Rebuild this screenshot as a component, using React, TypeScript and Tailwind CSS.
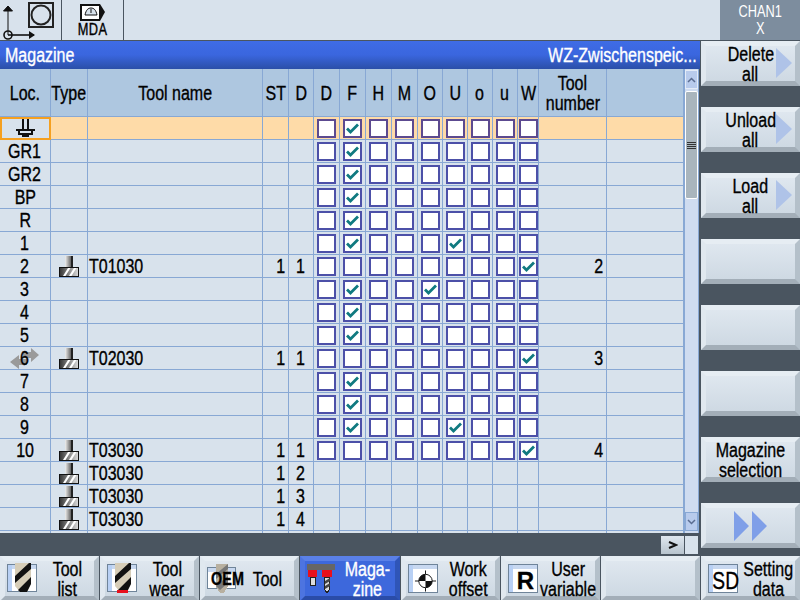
import React from 'react';

const FONT = "font-['Liberation_Sans',sans-serif]";
const GRID = 'grid grid-cols-[51px_37px_175px_26px_25px_26px_26px_26px_26px_25px_25px_25px_25px_21px_68px_77px]';
const CELL = 'border-r border-b border-[#88a8d4] flex items-center justify-center overflow-hidden';

const FLAGS = ['D', 'F', 'H', 'M', 'O', 'U', 'o', 'u', 'W'];

interface Row {
  loc?: React.ReactNode;
  tool?: string;
  st?: string;
  d?: string;
  checks?: string;
  num?: string;
  active?: boolean;
  move?: boolean;
}

// The panel font is a narrow bitmap face, nothing installed is that narrow
function Txt({ children, align = 'center' }: { children: React.ReactNode; align?: 'left' | 'center' | 'right' }) {
  const origin = align === 'left' ? 'origin-left' : align === 'right' ? 'origin-right' : 'origin-center';
  return <span className={`inline-block whitespace-nowrap scale-x-[0.8] ${origin}`}>{children}</span>;
}

const rows: Row[] = [
  { loc: <SpindleIcon />, checks: 'F', active: true },
  { loc: 'GR1', checks: 'F' },
  { loc: 'GR2', checks: 'F' },
  { loc: 'BP', checks: 'F' },
  { loc: 'R', checks: 'F' },
  { loc: '1', checks: 'FU' },
  { loc: '2', tool: 'T01030', st: '1', d: '1', checks: 'W', num: '2' },
  { loc: '3', checks: 'FO' },
  { loc: '4', checks: 'F' },
  { loc: '5', checks: 'F' },
  { loc: '6', tool: 'T02030', st: '1', d: '1', checks: 'W', num: '3', move: true },
  { loc: '7', checks: 'F' },
  { loc: '8', checks: 'F' },
  { loc: '9', checks: 'FU' },
  { loc: '10', tool: 'T03030', st: '1', d: '1', checks: 'W', num: '4' },
  { tool: 'T03030', st: '1', d: '2' },
  { tool: 'T03030', st: '1', d: '3' },
  { tool: 'T03030', st: '1', d: '4' },
  { checks: '' },
];

function SpindleIcon() {
  return (
    <svg width="19" height="19" viewBox="0 0 19 19" shapeRendering="crispEdges">
      <path d="M6 0h2v10H6zM11 0h2v10h-2zM0 10h19v2H0zM2 14h15v2H2zM2 12h2v2H2zM15 12h2v2h-2zM6 16h7v2H6z" fill="#111" />
    </svg>
  );
}

function CutterIcon() {
  return (
    <svg width="20" height="21" viewBox="0 0 20 21" shapeRendering="crispEdges">
      <defs>
        <linearGradient id="shank" x1="0" x2="1" y1="0" y2="0">
          <stop offset="0" stopColor="#f0f0f0" />
          <stop offset="0.6" stopColor="#808080" />
          <stop offset="1" stopColor="#333333" />
        </linearGradient>
        <linearGradient id="base" x1="0" x2="1" y1="0" y2="0">
          <stop offset="0" stopColor="#333333" />
          <stop offset="1" stopColor="#dddddd" />
        </linearGradient>
      </defs>
      <rect x="6" y="0" width="8" height="11" fill="url(#shank)" />
      <rect x="12" y="0" width="2" height="11" fill="#222" />
      <rect x="0.5" y="11.5" width="19" height="9" fill="url(#base)" stroke="#111" />
      <path d="M4 20l5-8h2.5l-5 8zM10 20l5-8h2.5l-5 8z" fill="#fff" shapeRendering="auto" />
    </svg>
  );
}

function Checkbox({ checked, warm }: { checked: boolean; warm?: boolean }) {
  return (
    <div className={`w-[19px] h-[19px] bg-white border-2 ${warm ? 'border-[#5c4a90]' : 'border-[#4c50a8]'} flex items-center justify-center shrink-0`}>
      {checked && (
        <svg width="15" height="13" viewBox="0 0 15 13">
          <path d="M2 6.5l3.5 3.5L13 2.5" fill="none" stroke="#107a80" strokeWidth="2.8" />
        </svg>
      )}
    </div>
  );
}

function MoveArrows() {
  return (
    <svg className="absolute left-[10px] top-[1px]" width="30" height="22" viewBox="0 0 30 22">
      <path d="M0 14l9-7v4h8v6H9v4zM29 7l-8-7v4h-8v6h8v4z" fill="#9a9a9a" />
    </svg>
  );
}

function Drill({ red }: { red?: boolean }) {
  return (
    <svg width="30" height="31" viewBox="0 0 30 31" shapeRendering="crispEdges">
      <rect x="0.5" y="1.5" width="29" height="27" fill="#fff" stroke="#6f8499" />
      <rect x="1" y="2" width="28" height="4" fill="#c8d8f0" />
      <rect x="1" y="2" width="4" height="26" fill="#b8d0f4" />
      <path d="M8 0h16v20l-4 9h-7l-5-6z" fill="#d6cdb8" shapeRendering="auto" />
      <path d="M8 13L22 0h2v6L8 20zM11 27L24 14v7l-4 8h-7z" fill="#111" shapeRendering="auto" />
      {red && <rect x="10" y="27" width="11" height="3" fill="#e8101c" />}
    </svg>
  );
}

function OemIcon() {
  return (
    <div className="relative w-[30px] h-[30px]">
      <svg width="30" height="30" viewBox="0 0 30 30" shapeRendering="crispEdges">
        <rect x="0.5" y="3.5" width="28" height="21" fill="#fff" stroke="#6f8499" />
        <rect x="1" y="4" width="27" height="4" fill="#c8d8f0" />
        <path d="M9 0h12v22l-4 7h-4l-4-6z" fill="#b8b0a0" />
        <path d="M9 10L21 0v5L9 15zM9 22L21 12v7l-8 7z" fill="#777" shapeRendering="auto" />
      </svg>
      <span className="absolute left-0 top-[6px] w-full text-center text-[18px] leading-[18px] font-bold">
        <Txt>OEM</Txt>
      </span>
    </div>
  );
}

function MagazineIcon() {
  return (
    <svg width="30" height="30" viewBox="0 0 30 30" shapeRendering="crispEdges">
      <rect x="0" y="0" width="28" height="6" fill="#666" />
      <rect x="1" y="6" width="9" height="7" fill="#e8101c" />
      <rect x="15" y="6" width="10" height="7" fill="#e8101c" />
      <rect x="3.5" y="13.5" width="5" height="8" fill="#ddd" stroke="#222" />
      <path d="M17.5 13.5h5v12l-2.5 3.5-2.5-3.5z" fill="#ddd" stroke="#222" />
      <path d="M18 17l5-3v3l-5 3zM18 22l5-3v3l-5 3z" fill="#444" shapeRendering="auto" />
    </svg>
  );
}

function FramedIcon({ children }: { children: React.ReactNode }) {
  return (
    <div className="relative border border-[#6f8499] bg-white w-[30px] h-[29px] pl-[5px] pt-[4px] shrink-0">
      <div className="absolute left-0 top-0 right-0 h-[4px] bg-[#c8d8f0]" />
      <div className="absolute left-0 top-0 bottom-0 w-[4px] bg-[#b8d0f4]" />
      <div className="relative h-full flex items-center justify-center">{children}</div>
    </div>
  );
}

function OffsetIcon() {
  return (
    <svg width="24" height="24" viewBox="0 0 24 24">
      <path d="M12 1v22M1 12h22" stroke="#111" strokeWidth="1" />
      <circle cx="12" cy="12" r="7" fill="#fff" stroke="#111" />
      <path d="M12 5a7 7 0 0 0-7 7h7zM12 19a7 7 0 0 0 7-7h-7z" fill="#111" />
    </svg>
  );
}

function Softkey({
  lines,
  icon,
  arrow,
  active,
  className = '',
}: {
  lines?: string[];
  icon?: React.ReactNode;
  arrow?: boolean;
  active?: boolean;
  className?: string;
}) {
  const skin = active
    ? 'border-t-[#5a80e8] border-l-[#4d74e0] border-r-[#2f55b8] border-b-[#2a4ca8] bg-[#3d68dc] text-white'
    : 'border-t-[#e6edf3] border-l-[#e0e8ef] border-r-[#b4c0ca] border-b-[#a3aeb8] bg-gradient-to-b from-[#dfe7ef] to-[#ced9e3] text-black';
  return (
    <div className={`relative h-[45px] border-[5px] border-solid flex items-center ${skin} ${className}`}>
      {icon && <div className="ml-[2px] shrink-0">{icon}</div>}
      {lines && (
        <div className={`flex-1 min-w-0 flex flex-col items-center text-[20px] leading-[20px] ${icon ? 'pl-[3px]' : ''}`}>
          {lines.map((l) => (
            <Txt key={l}>{l}</Txt>
          ))}
        </div>
      )}
      {arrow && (
        <svg className="absolute right-[3px] top-[2px]" width="16" height="30" viewBox="0 0 16 30">
          <path d="M0 0l16 15L0 30z" fill="#afc3e8" />
        </svg>
      )}
    </div>
  );
}

const rightKeys = [
  { lines: ['Delete', 'all'], arrow: true },
  { lines: ['Unload', 'all'], arrow: true },
  { lines: ['Load', 'all'], arrow: true },
  {},
  {},
  {},
  { lines: ['Magazine', 'selection'] },
];

export default function App() {
  return (
    <div className={`${FONT} w-[800px] h-[600px] bg-[#4a5560] flex flex-col overflow-hidden text-[20px] text-black [-webkit-text-stroke:0.35px]`}>
      {/* Top status bar */}
      <div className="h-[40px] bg-[#d8e2ec] flex shrink-0">
        <div className="w-[62px] border-r border-[#4a5560] flex items-center shrink-0">
          <svg width="61" height="40" viewBox="0 0 61 40">
            <path d="M8 35V7M3.5 11L8 6l4.5 5z" fill="#111" stroke="#111" />
            <path d="M8 35h26" stroke="#111" strokeWidth="1.6" />
            <path d="M29 31l6 4-6 4z" fill="#111" />
            <circle cx="8" cy="35" r="4" fill="none" stroke="#111" strokeWidth="1.6" />
            <rect x="29" y="3" width="24" height="24" fill="none" stroke="#222" strokeWidth="2" />
            <circle cx="41" cy="15" r="9.5" fill="none" stroke="#222" strokeWidth="2" />
          </svg>
        </div>
        <div className="w-[62px] border-r border-[#4a5560] flex flex-col items-center shrink-0 pt-[3px]">
          <svg width="27" height="19" viewBox="0 0 27 19">
            <path d="M1 1h20l5 8-5 9H1z" fill="#111" />
            <rect x="3" y="3" width="17" height="13" fill="#fff" />
            <path d="M6 12c1-5 3-7 6-7s5 2 6 7z" fill="#d8e2ec" stroke="#111" />
            <path d="M12 6v4" stroke="#111" />
          </svg>
          <span className="text-[16px] leading-[15px] tracking-[0.5px]"><Txt>MDA</Txt></span>
        </div>
        <div className="flex-1" />
        <div className="w-[80px] bg-[#7d8d9e] text-white flex flex-col items-center text-[16px] leading-[17px] pt-[3px] shrink-0 [-webkit-text-stroke:0px]">
          <Txt>CHAN1</Txt>
          <Txt>X</Txt>
        </div>
      </div>

      {/* Work area */}
      <div className="flex mt-[1px] h-[514px] shrink-0">
        <div className="w-[700px] shrink-0 flex flex-col">
          <div className="h-[28px] bg-gradient-to-b from-[#3f6ce6] via-[#3a66de] to-[#2b4fa8] text-white flex items-center justify-between pl-[5px] pr-[3px] shrink-0 text-[20px]">
            <Txt align="left">Magazine</Txt>
            <Txt align="right">WZ-Zwischenspeic...</Txt>
          </div>
          <div className="flex h-[464px] shrink-0">
            <div className="w-[684px] bg-[#d8e2ec] overflow-hidden shrink-0">
              <div className={`${GRID} h-[48px] bg-[#aec7e0] leading-[20px]`}>
                {['Loc.', 'Type', 'Tool name', 'ST', 'D', ...FLAGS].map((h) => (
                  <div key={h} className={CELL}><Txt>{h}</Txt></div>
                ))}
                <div className={`${CELL} flex-col`}><Txt>Tool</Txt><Txt>number</Txt></div>
                <div className={CELL} />
              </div>
              {rows.map((r, i) => (
                <div key={i} className={`${GRID} h-[23px] ${r.active ? 'bg-[#fedba8]' : ''}`}>
                  <div className={`${CELL} relative ${r.active ? 'bg-[#d8e2ec] outline-2 -outline-offset-2 outline-[#f5a020]' : ''}`}>
                    {r.move && <MoveArrows />}
                    <div className="relative">{typeof r.loc === 'string' ? <Txt>{r.loc}</Txt> : r.loc}</div>
                  </div>
                  <div className={CELL}>{r.tool && <CutterIcon />}</div>
                  <div className={`${CELL} !justify-start pl-[1px]`}>{r.tool && <Txt align="left">{r.tool}</Txt>}</div>
                  <div className={`${CELL} !justify-end pr-[3px]`}>{r.st && <Txt align="right">{r.st}</Txt>}</div>
                  <div className={CELL}>{r.d && <Txt>{r.d}</Txt>}</div>
                  {FLAGS.map((f) => (
                    <div key={f} className={CELL}>
                      {r.checks !== undefined && <Checkbox checked={r.checks.includes(f)} warm={r.active} />}
                    </div>
                  ))}
                  <div className={`${CELL} !justify-end pr-[3px]`}>{r.num && <Txt align="right">{r.num}</Txt>}</div>
                  <div className={CELL} />
                </div>
              ))}
            </div>
            {/* Scrollbar */}
            <div className="w-[15px] bg-[#cfdcf0] border-x border-[#88a8d4] flex flex-col shrink-0">
              <div className="h-[19px] mt-[1px] bg-[#b8cbec] border border-[#e4ecf8] flex items-center justify-center shrink-0">
                <svg width="9" height="6" viewBox="0 0 9 6"><path d="M1 5l3.5-3.5L8 5" fill="none" stroke="#5a6c90" strokeWidth="1.5" /></svg>
              </div>
              <div className="h-[108px] mt-[2px] bg-[#a9b5bd] border border-white rounded-[2px] flex flex-col items-center justify-center gap-[1px] shrink-0">
                {[0, 1, 2, 3].map((i) => <div key={i} className="w-[9px] h-[1px] bg-[#333]" />)}
              </div>
              <div className="flex-1" />
              <div className="h-[19px] mb-[2px] bg-[#b8cbec] border border-[#88a8d4] flex items-center justify-center shrink-0">
                <svg width="9" height="6" viewBox="0 0 9 6"><path d="M1 1l3.5 3.5L8 1" fill="none" stroke="#5a6c90" strokeWidth="1.5" /></svg>
              </div>
            </div>
          </div>
          {/* Horizontal scroll stub */}
          <div className="flex justify-end mt-[3px] pr-[2px] gap-[1px] h-[18px] shrink-0">
            <div className="w-[23px] bg-gradient-to-b from-[#dfe7ef] to-[#b8c4ce] flex items-center justify-center">
              <svg width="10" height="8" viewBox="0 0 10 8"><path d="M1 1l7 3-7 3" fill="none" stroke="#111" strokeWidth="2" /></svg>
            </div>
            <div className="w-[13px] bg-[#d8e2ec]" />
          </div>
        </div>
        <div className="w-[99px] ml-[1px] flex flex-col gap-[21px] shrink-0">
          {rightKeys.map((k, i) => <Softkey key={i} {...k} />)}
          <Softkey
            icon={
              <div className="flex justify-center w-[79px] ml-[3px]">
                <svg width="34" height="30" viewBox="0 0 34 30">
                  <path d="M0 0l15 15L0 30zM18 0l15 15-15 15z" fill="#7f9fe8" />
                </svg>
              </div>
            }
          />
        </div>
      </div>

      {/* Bottom softkeys */}
      <div className="mt-[1px] h-[45px] flex gap-[1px] shrink-0">
        <Softkey className="w-[99px]" icon={<Drill />} lines={['Tool', 'list']} />
        <Softkey className="w-[99px]" icon={<Drill red />} lines={['Tool', 'wear']} />
        <Softkey className="w-[99px]" icon={<OemIcon />} lines={['Tool']} />
        <Softkey className="w-[100px]" active icon={<MagazineIcon />} lines={['Maga-', 'zine']} />
        <Softkey className="w-[99px]" icon={<FramedIcon><OffsetIcon /></FramedIcon>} lines={['Work', 'offset']} />
        <Softkey className="w-[99px]" icon={<FramedIcon><span className="text-[24px] font-bold leading-none">R</span></FramedIcon>} lines={['User', 'variable']} />
        <Softkey className="w-[99px]" />
        <Softkey className="w-[99px]" icon={<FramedIcon><span className="text-[24px] leading-none"><Txt>SD</Txt></span></FramedIcon>} lines={['Setting', 'data']} />
      </div>
    </div>
  );
}
